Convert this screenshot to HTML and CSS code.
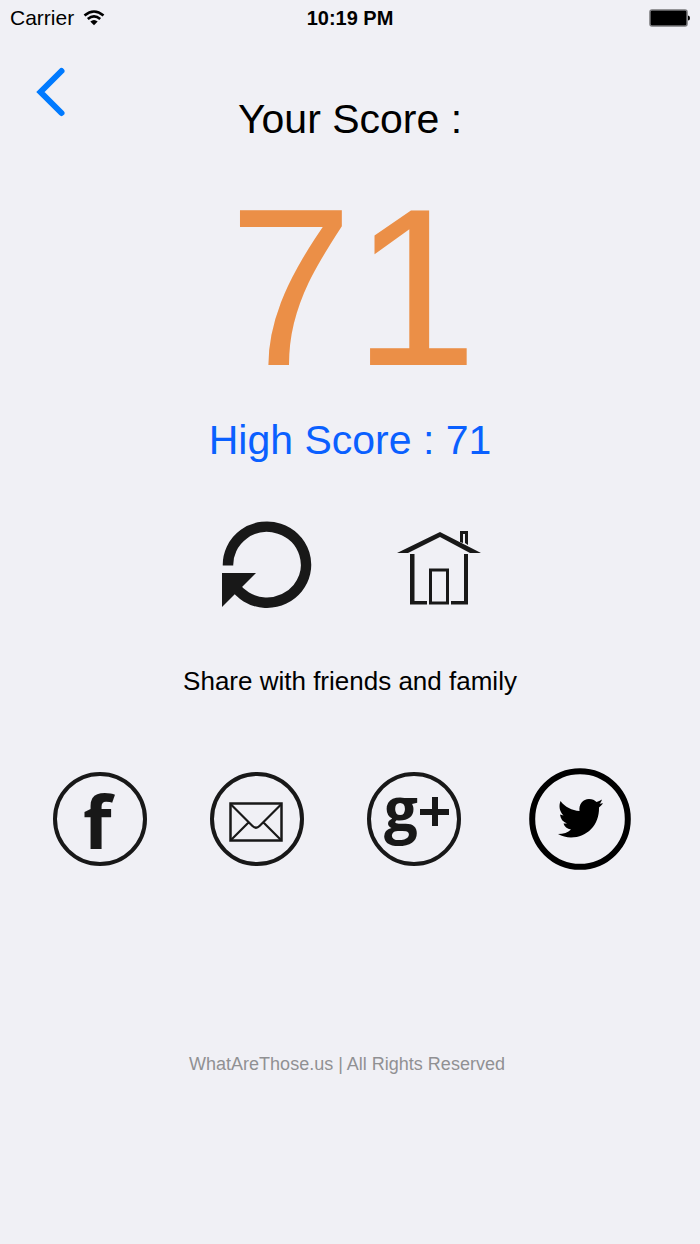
FILE: index.html
```html
<!DOCTYPE html>
<html lang="en">
<head>
    <meta charset="UTF-8">
    <meta name="viewport" content="width=device-width, initial-scale=1.0">
    <title>Your Score</title>
    <link rel="stylesheet" href="styles.css">
</head>
<body>

    <!-- Status Bar -->
    <div class="status-bar">
        <div class="carrier">
            <span>Carrier</span>
            <svg class="wifi" viewBox="0 0 22 16" aria-hidden="true">
                <path d="M1.500 5.500Q11 -2.500 20.500 5.500M4.800 9Q11 3.800 17.200 9" fill="none" stroke="#000" stroke-width="2.600"/>
                <path d="M7.300 11.500Q11 8.500 14.700 11.500L11 15.300Z"/>
            </svg>
        </div>
        <div class="time">10:19 PM</div>
        <svg class="battery" viewBox="0 0 42 18" aria-hidden="true">
            <rect x="2" y="1" width="37" height="16" rx="2" fill="#000" stroke="#77777a" stroke-width="1.500"/>
            <path d="M40 6.500Q42 6.500 42 9Q42 11.500 40 11.500Z"/>
        </svg>
    </div>

    <!-- Header -->
    <header class="header">
        <button class="icon-button back" aria-label="Back">
            <svg width="28" height="50" viewBox="0 0 28 50">
                <path d="M24.500 4L3.500 25L24.500 46" fill="none" stroke="#007aff" stroke-width="6" stroke-linecap="round" stroke-linejoin="miter"/>
            </svg>
        </button>
        <h1>Your Score :</h1>
    </header>

    <main>
        <div class="score">71</div>
        <div class="high-score">High Score : 71</div>

        <!-- Retry and Home -->
        <div class="actions">
            <button class="icon-button" aria-label="Play again">
                <svg width="90" height="88" viewBox="0 0 90 88">
                    <path d="M7 43.500A39 38 0 1 1 13 63" fill="none" stroke="#181818" stroke-width="10.500"/>
                    <path d="M1 51H35L1 85Z" fill="#181818"/>
                </svg>
            </button>
            <button class="icon-button" aria-label="Home">
                <svg width="84" height="88" viewBox="0 0 84 88">
                    <g fill="#181818">
                        <path d="M0 31L43 10L84 31H73L43 15L11 31Z"/>
                        <path d="M13 32H17.500V79H30V82.500H13Z"/>
                        <path d="M67 32H71V82.500H54V79H67Z"/>
                        <path d="M63 20V9H71V23L68 21V12H66V21Z"/>
                    </g>
                    <rect x="33.500" y="48" width="17" height="33" fill="none" stroke="#181818" stroke-width="3"/>
                </svg>
            </button>
        </div>

        <p class="share-text">Share with friends and family</p>

        <!-- Share Buttons -->
        <div class="share">
            <button class="icon-button" aria-label="Share on Facebook">
                <svg width="94" height="94" viewBox="0 0 94 94">
                    <circle cx="47" cy="47" r="45" fill="none" stroke="#181818" stroke-width="4"/>
                    <text class="glyph-f" x="30" y="77">f</text>
                </svg>
            </button>
            <button class="icon-button" aria-label="Share by email">
                <svg width="94" height="94" viewBox="0 0 94 94">
                    <g fill="none" stroke="#181818">
                        <circle cx="47" cy="47" r="45" stroke-width="4"/>
                        <rect x="20.500" y="31.500" width="51" height="37" stroke-width="2.500"/>
                        <path d="M21 32.500L42.500 54Q46 57.500 49.500 54L71 32.500M21 68L38.500 50.500M71 68L53.500 50.500" stroke-width="2.200"/>
                    </g>
                </svg>
            </button>
            <button class="icon-button" aria-label="Share on Google Plus">
                <svg width="94" height="94" viewBox="0 0 94 94">
                    <circle cx="47" cy="47" r="45" fill="none" stroke="#181818" stroke-width="4"/>
                    <text class="glyph-g" x="17" y="59">g</text>
                    <path d="M65 25H71V37H82V43H71V54H65V43H53V37H65Z" fill="#181818"/>
                </svg>
            </button>
            <button class="icon-button twitter" aria-label="Share on Twitter">
                <svg width="102" height="102" viewBox="0 0 102 102">
                    <circle cx="51" cy="51" r="47.800" fill="none" stroke="#000" stroke-width="6"/>
                    <path d="M31.500 33C36 39 43 42.500 50.500 43C49.500 36 54 31 60 31C63.500 31 65.500 32.200 67.500 34C69.500 33.500 71 32.800 73 31.500C72.500 33.500 71.500 34.800 70.500 35.800L74 35.200C72.800 37 71.500 38.300 70 39.500C70.500 57 58 69.500 42 69.500C37.500 69.500 33 68.200 29 66C34.500 66 39 64.500 42 61.500C38 61 35.500 58.500 34.500 55.500H38C34 54 31.500 51 31 46.500L34.500 47.500C30.500 43.500 29.500 38 31.500 33Z"/>
                </svg>
            </button>
        </div>
    </main>

    <footer>WhatAreThose.us | All Rights Reserved</footer>

</body>
</html>
```
FILE: styles.css
```css
/* General Styles */
* {
    box-sizing: border-box;
}

body {
    margin: 0;
    font-family: "Liberation Sans", Arial, sans-serif;
    background: #f0f0f5;
    color: #000;
    text-align: center;
}

svg {
    display: block;
    overflow: visible;
}

/* Status Bar */
.status-bar {
    display: grid;
    grid-template-columns: 1fr auto 1fr;
    align-items: center;
    height: 36px;
    padding: 0 10px;
    font-size: 20px;
}

.carrier {
    display: flex;
    align-items: center;
    gap: 9px;
    font-size: 21px;
}

.wifi {
    width: 22px;
    height: 16px;
}

.time {
    font-weight: bold;
}

.battery {
    width: 42px;
    height: 18px;
    justify-self: end;
}

/* Header */
.header {
    display: grid;
    grid-template-columns: 1fr auto 1fr;
    align-items: start;
    padding: 31px 37px 0;
}

h1 {
    margin: 27px 0 0;
    font-size: 41px;
    font-weight: normal;
    line-height: 50px;
}

.icon-button {
    padding: 0;
    border: none;
    background: none;
    cursor: pointer;
}

.back {
    justify-self: start;
}

/* Score */
.score {
    margin-top: 31px;
    padding-left: 6px;
    font-size: 224px;
    line-height: 224px;
    color: #eb8f47;
}

.high-score {
    margin-top: 16px;
    font-size: 41px;
    line-height: 50px;
    color: #0a60ff;
}

/* Retry and Home */
.actions {
    display: flex;
    justify-content: center;
    gap: 86px;
    margin-top: 57px;
    padding-left: 2px;
}

.share-text {
    margin: 55px 0 0;
    font-size: 26px;
    line-height: 32px;
}

/* Share Buttons */
.share {
    display: flex;
    justify-content: center;
    align-items: center;
    gap: 63px;
    margin-top: 71px;
    padding-right: 16px;
}

.twitter {
    margin-left: 5px;
}

.glyph-f,
.glyph-g {
    font-family: "Open Sans", sans-serif;
    font-weight: bold;
    fill: #181818;
}

.glyph-f {
    font-size: 74px;
}

.glyph-g {
    font-size: 60px;
}

footer {
    margin-top: 182px;
    padding-right: 6px;
    font-size: 18px;
    line-height: 24px;
    color: #909093;
}
```
